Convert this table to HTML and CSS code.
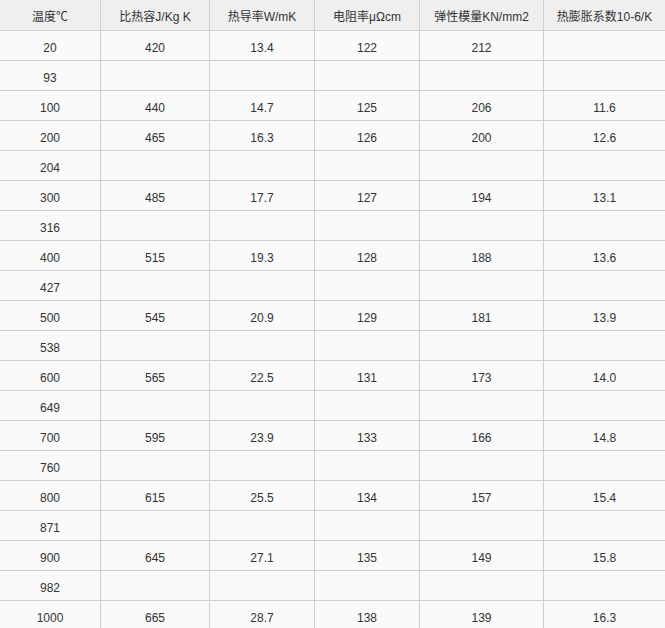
FILE: index.html
```html
<!DOCTYPE html>
<html lang="zh">
<head>
<meta charset="utf-8">
<link rel="stylesheet" href="styles.css">
</head>
<body>
<table class="data">
<colgroup>
<col class="c1"><col class="c2"><col class="c3"><col class="c4"><col class="c5"><col class="c6">
</colgroup>
<thead>
<tr><th>温度℃</th><th>比热容J/Kg K</th><th>热导率W/mK</th><th>电阻率μΩcm</th><th>弹性模量KN/mm2</th><th>热膨胀系数10-6/K</th></tr>
</thead>
<tbody>
<tr><td>20</td><td>420</td><td>13.4</td><td>122</td><td>212</td><td></td></tr>
<tr><td>93</td><td></td><td></td><td></td><td></td><td></td></tr>
<tr><td>100</td><td>440</td><td>14.7</td><td>125</td><td>206</td><td>11.6</td></tr>
<tr><td>200</td><td>465</td><td>16.3</td><td>126</td><td>200</td><td>12.6</td></tr>
<tr><td>204</td><td></td><td></td><td></td><td></td><td></td></tr>
<tr><td>300</td><td>485</td><td>17.7</td><td>127</td><td>194</td><td>13.1</td></tr>
<tr><td>316</td><td></td><td></td><td></td><td></td><td></td></tr>
<tr><td>400</td><td>515</td><td>19.3</td><td>128</td><td>188</td><td>13.6</td></tr>
<tr><td>427</td><td></td><td></td><td></td><td></td><td></td></tr>
<tr><td>500</td><td>545</td><td>20.9</td><td>129</td><td>181</td><td>13.9</td></tr>
<tr><td>538</td><td></td><td></td><td></td><td></td><td></td></tr>
<tr><td>600</td><td>565</td><td>22.5</td><td>131</td><td>173</td><td>14.0</td></tr>
<tr><td>649</td><td></td><td></td><td></td><td></td><td></td></tr>
<tr><td>700</td><td>595</td><td>23.9</td><td>133</td><td>166</td><td>14.8</td></tr>
<tr><td>760</td><td></td><td></td><td></td><td></td><td></td></tr>
<tr><td>800</td><td>615</td><td>25.5</td><td>134</td><td>157</td><td>15.4</td></tr>
<tr><td>871</td><td></td><td></td><td></td><td></td><td></td></tr>
<tr><td>900</td><td>645</td><td>27.1</td><td>135</td><td>149</td><td>15.8</td></tr>
<tr><td>982</td><td></td><td></td><td></td><td></td><td></td></tr>
<tr><td>1000</td><td>665</td><td>28.7</td><td>138</td><td>139</td><td>16.3</td></tr>
</tbody>
</table>
</body>
</html>
```
FILE: styles.css
```css
html, body {
  margin: 0;
  padding: 0;
  background: #fafafa;
}
.data {
  border-collapse: separate;
  border-spacing: 0;
  table-layout: fixed;
  width: 666px;
  font-family: "Liberation Sans", Arial, "Noto Sans CJK SC", sans-serif;
  font-size: 12px;
  color: #333;
}
.c1 { width: 101px; }
.c2 { width: 109px; }
.c3 { width: 105px; }
.c4 { width: 105px; }
.c5 { width: 124px; }
.c6 { width: 122px; }
.data th, .data td {
  box-sizing: border-box;
  padding: 0;
  text-align: center;
  vertical-align: middle;
  border-right: 1px solid #cfcfcf;
  border-bottom: 1px solid #cfcfcf;
  font-weight: normal;
  white-space: nowrap;
  overflow: hidden;
}
.data th {
  height: 31px;
  background: #efefef;
}
.data td {
  height: 30px;
  background: #fafafa;
  padding-top: 4px;
}
```
